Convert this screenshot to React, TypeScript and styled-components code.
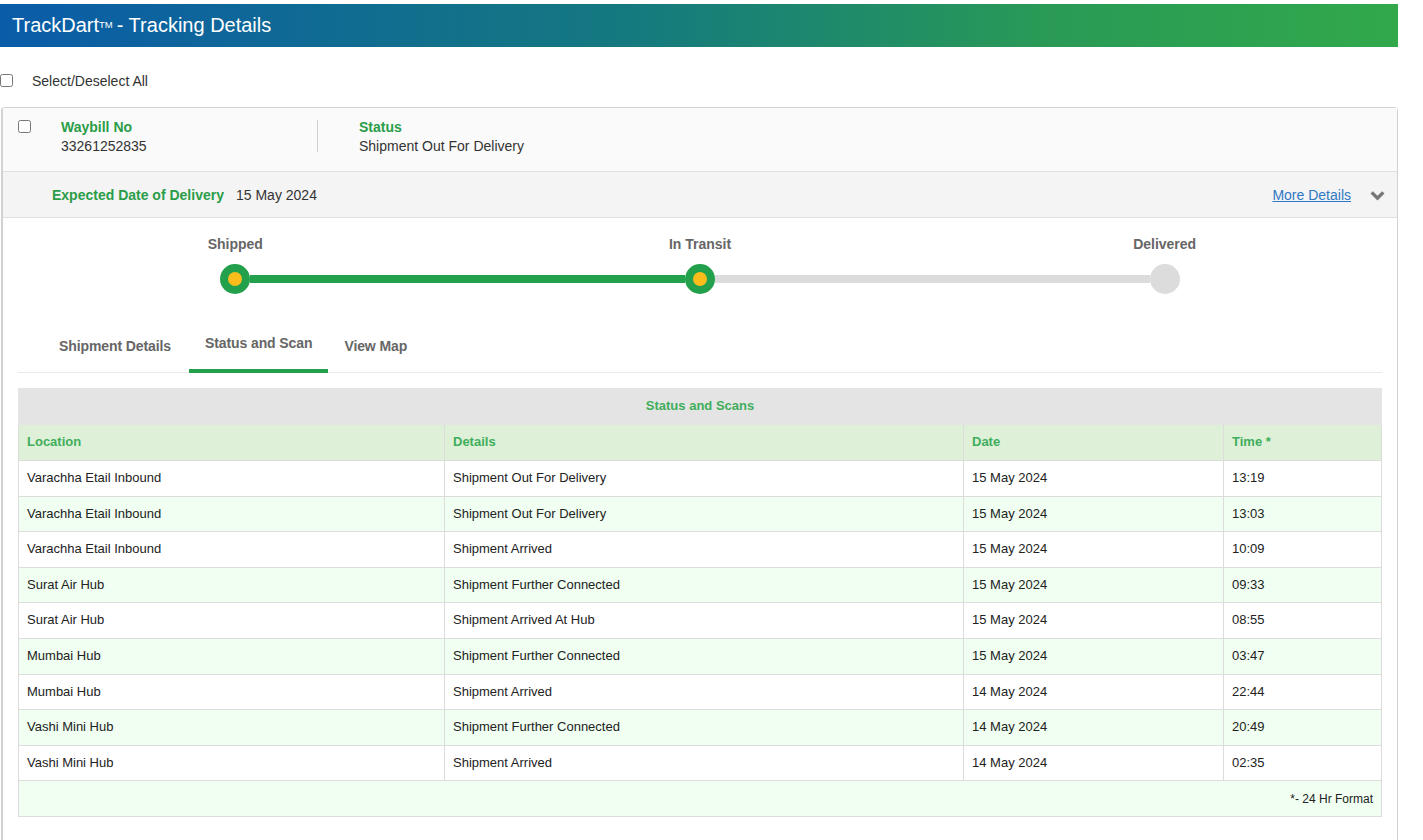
import styled, { createGlobalStyle } from 'styled-components';

const GlobalStyle = createGlobalStyle`
    body {
        margin: 0;
        font-family: "Liberation Sans", Arial, sans-serif;
        color: #333;
        background: #fff;
    }
    * { box-sizing: border-box; }
`;

const Page = styled.div`
    width: 1398px;
    padding-top: 4px;
`;

const TitleBar = styled.div`
    height: 43px;
    display: flex;
    align-items: center;
    padding-left: 12px;
    background: linear-gradient(90deg, #0a5ca8 0%, #15797f 45%, #2a9a56 75%, #32a84b 100%);
    color: #fff;
    font-size: 20px;
`;

const Tm = styled.span`
    font-size: 9.5px;
    position: relative;
    top: -1px;
    margin-right: 4px;
`;

const SelectRow = styled.label`
    display: flex;
    align-items: center;
    height: 67px;
    font-size: 14px;
    color: #333;
    margin-bottom: -7px;
`;

const Check = styled.input.attrs({ type: 'checkbox' })`
    width: 13px;
    height: 13px;
    margin: 0;
`;

const SelectText = styled.span`
    margin-left: 19px;
`;

const Card = styled.div`
    margin-left: 1px;
    border: 1px solid #d2d2d2;
    border-left-width: 2px;
    border-radius: 4px 4px 0 0;
    background: #fff;
    padding-bottom: 60px;
`;

const Summary = styled.div`
    display: flex;
    align-items: flex-start;
    height: 63px;
    padding: 10px 0 0 15px;
    background: #fafafa;
`;

const SummaryCheck = styled(Check)`
    margin-top: 2px;
`;

const Field = styled.div<{ $divider?: boolean; $width?: number }>`
    display: flex;
    flex-direction: column;
    gap: 1px;
    font-size: 14px;
    line-height: 18px;
    ${(p) => (p.$width ? `width: ${p.$width}px;` : '')}
    ${(p) => (p.$divider ? 'border-right: 1px solid #cfcfcf; height: 32px; margin-top: 2px; padding-top: 0;' : '')}
`;

const WaybillField = styled(Field)`
    margin-left: 30px;
    & > span:first-child {
        margin-top: -2px;
    }
`;

const StatusField = styled(Field)`
    margin-left: 41px;
`;

const Label = styled.span`
    color: #2a9d48;
    font-weight: bold;
`;

const ExpectedRow = styled.div`
    display: flex;
    align-items: center;
    height: 47px;
    padding: 0 12px 0 49px;
    background: #f4f4f4;
    border-top: 1px solid #e0e0e0;
    border-bottom: 1px solid #e0e0e0;
    font-size: 14px;
`;

const ExpectedDate = styled.span`
    margin-left: 12px;
`;

const MoreLink = styled.a`
    margin-left: auto;
    color: #2f78c4;
    text-decoration: underline;
    cursor: pointer;
`;

const Chevron = styled.svg`
    margin-left: 19px;
    margin-top: 2px;
`;

const Progress = styled.div`
    display: grid;
    grid-template-columns: repeat(3, 1fr);
    padding-top: 17px;
`;

const Step = styled.div`
    display: flex;
    flex-direction: column;
    align-items: center;
`;

const StepLabel = styled.span`
    font-size: 14px;
    font-weight: bold;
    color: #666;
    line-height: 18px;
`;

const Track = styled.div`
    display: flex;
    align-items: center;
    width: 100%;
    margin-top: 11px;
`;

const Segment = styled.div<{ $color: string }>`
    flex: 1;
    height: 8px;
    background: ${(p) => p.$color};
`;

const Dot = styled.div<{ $done: boolean }>`
    width: 30px;
    height: 30px;
    border-radius: 50%;
    flex-shrink: 0;
    display: flex;
    align-items: center;
    justify-content: center;
    background: ${(p) => (p.$done ? '#22a04b' : '#dcdcdc')};
    &::after {
        content: '';
        display: ${(p) => (p.$done ? 'block' : 'none')};
        width: 14px;
        height: 14px;
        border-radius: 50%;
        background: #fbbd1c;
    }
`;

const Body = styled.div`
    padding: 0 15px;
`;

const TabList = styled.div`
    display: flex;
    align-items: flex-end;
    margin-top: 40px;
    padding-left: 25px;
    border-bottom: 1px solid #eaeaea;
`;

const Tab = styled.div<{ $active?: boolean }>`
    padding: 0 16px ${(p) => (p.$active ? '17px' : '14px')};
    margin-right: ${(p) => (p.$active ? '0' : '2px')};
    font-size: 14px;
    font-weight: bold;
    line-height: 18px;
    letter-spacing: -0.1px;
    color: #666;
    border-bottom: 4px solid ${(p) => (p.$active ? '#22a04b' : 'transparent')};
    margin-bottom: -1px;
    cursor: pointer;
`;

const Table = styled.table`
    width: 1363px;
    margin-top: 15px;
    border-collapse: collapse;
    font-size: 13px;
    line-height: 18.6px;
    table-layout: fixed;
`;

const Caption = styled.th`
    background: #e4e4e4;
    color: #3fae5c;
    font-weight: bold;
    text-align: center;
    padding: 8px;
    height: 36px;
    border: 1px solid #e4e4e4;
`;

const HeadCell = styled.th`
    background: #def0d8;
    color: #3fae5c;
    text-align: left;
    font-weight: bold;
    padding: 8px;
    height: 36px;
    border: 1px solid #dcdcdc;
    border-top: none;
`;

const Row = styled.tr<{ $alt: boolean }>`
    background: ${(p) => (p.$alt ? '#f0fff1' : '#fff')};
`;

const Cell = styled.td`
    padding: 8px;
    height: 35.6px;
    border: 1px solid #dcdcdc;
    color: #222;
`;

const FootCell = styled.td`
    background: #f0fff1;
    text-align: right;
    font-size: 12px;
    padding: 8px;
    height: 36px;
    border: 1px solid #dcdcdc;
    color: #222;
`;

const scans = [
    ['Varachha Etail Inbound', 'Shipment Out For Delivery', '15 May 2024', '13:19'],
    ['Varachha Etail Inbound', 'Shipment Out For Delivery', '15 May 2024', '13:03'],
    ['Varachha Etail Inbound', 'Shipment Arrived', '15 May 2024', '10:09'],
    ['Surat Air Hub', 'Shipment Further Connected', '15 May 2024', '09:33'],
    ['Surat Air Hub', 'Shipment Arrived At Hub', '15 May 2024', '08:55'],
    ['Mumbai Hub', 'Shipment Further Connected', '15 May 2024', '03:47'],
    ['Mumbai Hub', 'Shipment Arrived', '14 May 2024', '22:44'],
    ['Vashi Mini Hub', 'Shipment Further Connected', '14 May 2024', '20:49'],
    ['Vashi Mini Hub', 'Shipment Arrived', '14 May 2024', '02:35'],
];

const steps = [
    { name: 'Shipped', done: true },
    { name: 'In Transit', done: true },
    { name: 'Delivered', done: false },
];

const App = () => {
    return (
        <Page>
            <GlobalStyle />
            <TitleBar>
                TrackDart<Tm>TM</Tm>- Tracking Details
            </TitleBar>
            <SelectRow>
                <Check />
                <SelectText>Select/Deselect All</SelectText>
            </SelectRow>
            <Card>
                <Summary>
                    <SummaryCheck />
                    <WaybillField $divider $width={257}>
                        <Label>Waybill No</Label>
                        <span>33261252835</span>
                    </WaybillField>
                    <StatusField>
                        <Label>Status</Label>
                        <span>Shipment Out For Delivery</span>
                    </StatusField>
                </Summary>
                <ExpectedRow>
                    <Label>Expected Date of Delivery</Label>
                    <ExpectedDate>15 May 2024</ExpectedDate>
                    <MoreLink>More Details</MoreLink>
                    <Chevron width="15" height="10" viewBox="0 0 15 10">
                        <path d="M0.5 2.5 L2.8 0.3 L7.5 4.8 L12.2 0.3 L14.5 2.5 L7.5 9.4 Z" fill="#777" />
                    </Chevron>
                </ExpectedRow>
                <Progress>
                    {steps.map((s, i) => (
                        <Step key={s.name}>
                            <StepLabel>{s.name}</StepLabel>
                            <Track>
                                <Segment
                                    $color={i === 0 ? 'transparent' : steps[i].done ? '#22a04b' : '#dcdcdc'}
                                />
                                <Dot $done={s.done} />
                                <Segment
                                    $color={
                                        i === steps.length - 1
                                            ? 'transparent'
                                            : steps[i + 1].done
                                            ? '#22a04b'
                                            : '#dcdcdc'
                                    }
                                />
                            </Track>
                        </Step>
                    ))}
                </Progress>
                <Body>
                    <TabList>
                        <Tab>Shipment Details</Tab>
                        <Tab $active>Status and Scan</Tab>
                        <Tab>View Map</Tab>
                    </TabList>
                    <Table>
                        <colgroup>
                            <col style={{ width: 426 }} />
                            <col style={{ width: 519 }} />
                            <col style={{ width: 260 }} />
                            <col style={{ width: 158 }} />
                        </colgroup>
                        <thead>
                            <tr>
                                <Caption colSpan={4}>Status and Scans</Caption>
                            </tr>
                            <tr>
                                <HeadCell>Location</HeadCell>
                                <HeadCell>Details</HeadCell>
                                <HeadCell>Date</HeadCell>
                                <HeadCell>Time *</HeadCell>
                            </tr>
                        </thead>
                        <tbody>
                            {scans.map((r, i) => (
                                <Row key={i} $alt={i % 2 === 1}>
                                    {r.map((c, j) => (
                                        <Cell key={j}>{c}</Cell>
                                    ))}
                                </Row>
                            ))}
                            <tr>
                                <FootCell colSpan={4}>*- 24 Hr Format</FootCell>
                            </tr>
                        </tbody>
                    </Table>
                </Body>
            </Card>
        </Page>
    );
};

export default App;
